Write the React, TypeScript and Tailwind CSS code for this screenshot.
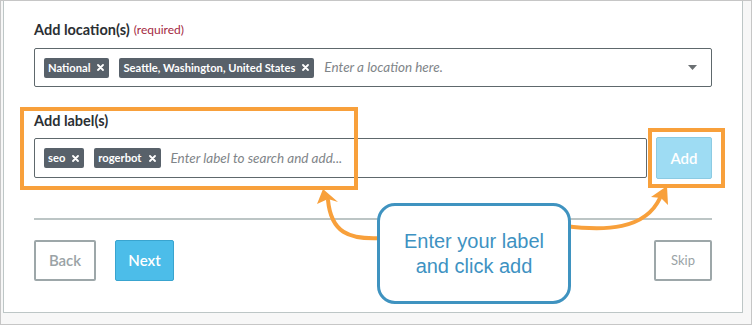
const Tag = ({ text }: { text: string }) => (
  <span className="flex h-[20px] items-center gap-[7px] rounded-[2px] bg-[#58616a] pl-[4px] pr-[5px] text-[11.2px] font-bold leading-none text-white">
    {text}
    <svg width="7" height="7" viewBox="0 0 7 7">
      <path d="M1 1 L6 6 M6 1 L1 6" stroke="#fff" strokeWidth="1.8" strokeLinecap="round" />
    </svg>
  </span>
);

export default function App() {
  return (
    <div className="relative h-[325px] w-[752px] overflow-hidden border border-[#c6c6c6] bg-[#f7f7f7] font-['Lato','Noto_Sans',sans-serif] text-[#2b2f33]">
      <div className="ml-[2px] flex h-[312px] w-[740px] flex-col border-x border-b border-[#bdc6c6] bg-white px-[30px] pt-[19px]">
        <div className="flex h-[20px] items-center gap-[4px]">
          <span className="text-[14.5px] font-bold">Add location(s)</span>
          <span className="text-[12px] text-[#a4283f]">(required)</span>
        </div>
        <div className="mt-[8px] flex h-[39px] items-center gap-[10px] rounded-[2px] border border-[#5e686c] pl-[9px] pr-[14px]">
          <Tag text="National" />
          <Tag text="Seattle, Washington, United States" />
          <span className="flex-1 text-[13.5px] italic text-[#7f8589]">Enter a location here.</span>
          <svg width="9" height="5" viewBox="0 0 9 5">
            <path d="M0 0 L9 0 L4.5 5 Z" fill="#6b6f72" />
          </svg>
        </div>

        <div className="mt-[24px] flex h-[20px] items-center">
          <span className="text-[14.5px] font-bold">Add label(s)</span>
        </div>
        <div className="mt-[6px] flex h-[42px] items-center gap-[9px]">
          <div className="flex h-[40px] flex-1 items-center gap-[10px] rounded-[2px] border border-[#5e686c] pl-[9px]">
            <Tag text="seo" />
            <Tag text="rogerbot" />
            <span className="text-[13.5px] italic text-[#7f8589]">Enter label to search and add...</span>
          </div>
          <button className="flex h-[42px] w-[56px] items-center justify-center rounded-[2px] border border-[#8ccbe3] bg-[#9edcf3] text-[15px] font-semibold text-white">
            Add
          </button>
        </div>

        <div className="mt-[39px] h-[2px] bg-[#bcc5c5]" />

        <div className="mt-[20px] flex h-[41px] items-center">
          <button className="flex h-[41px] w-[62px] items-center justify-center rounded-[2px] border-2 border-[#9da7a9] text-[15px] font-semibold text-[#9aa3a6]">
            Back
          </button>
          <button className="ml-[19px] flex h-[41px] w-[59px] items-center justify-center rounded-[2px] border border-[#39a4cf] bg-[#4cbde9] text-[15px] font-semibold text-white">
            Next
          </button>
          <div className="flex-1" />
          <button className="flex h-[41px] w-[58px] items-center justify-center rounded-[2px] border-2 border-[#9da7a9] text-[13px] text-[#9aa3a6]">
            Skip
          </button>
        </div>
      </div>

      {/* annotation overlay */}
      <div className="pointer-events-none absolute left-[19px] top-[106px] h-[83px] w-[338px] border-4 border-[#f8a03b]" />
      <div className="pointer-events-none absolute left-[647px] top-[127px] h-[60px] w-[77px] border-4 border-[#f8a03b]" />
      <svg className="pointer-events-none absolute left-[-1px] top-[-1px]" width="752" height="325" viewBox="0 0 752 325">
        <path d="M382 238 C 348 240, 331 232, 328 200" fill="none" stroke="#f8a03b" strokeWidth="4" strokeLinecap="round" />
        <path d="M323 189 L338 202 L328 199 L317 204 Z" fill="#f8a03b" />
        <path d="M565 226 C 605 231, 645 230, 660 198" fill="none" stroke="#f8a03b" strokeWidth="4" strokeLinecap="round" />
        <path d="M667 186 L668 205 L661 198 L651 197 Z" fill="#f8a03b" />
      </svg>
      <div className="absolute left-[376px] top-[202px] flex h-[101px] w-[194px] flex-col items-center justify-center rounded-[18px] border-[3px] border-[#3f93c0] bg-white font-['Liberation_Sans',Arial,sans-serif] text-[20px] leading-[25px] text-[#3e92c2]">
        <span>Enter your label</span>
        <span>and click add</span>
      </div>
    </div>
  );
}
